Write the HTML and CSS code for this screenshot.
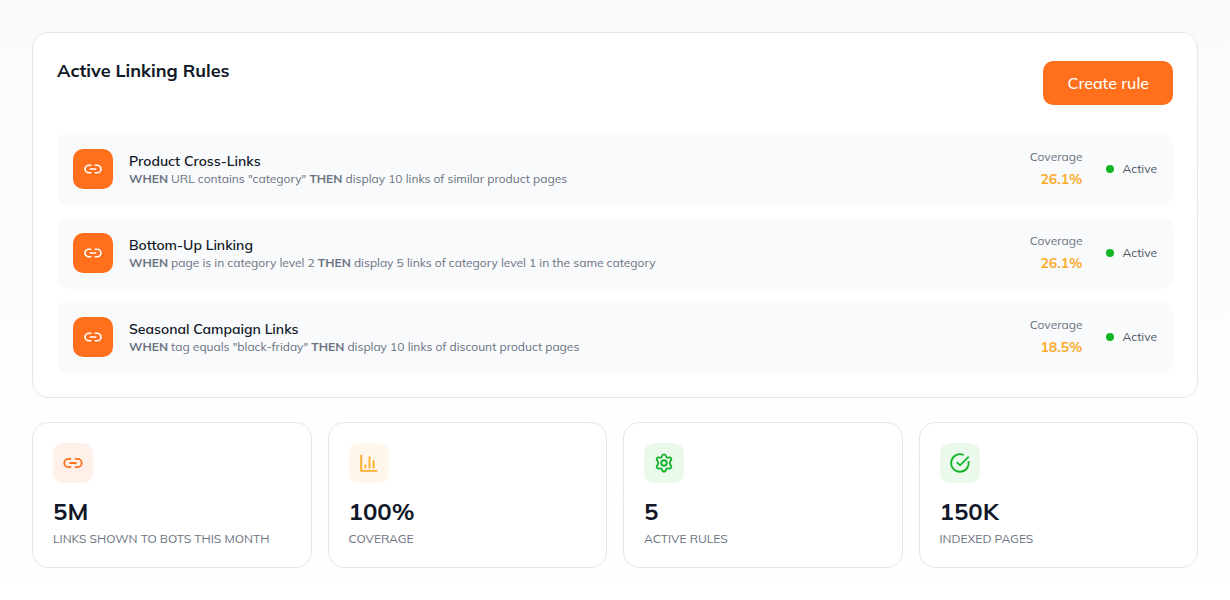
FILE: index.html
```html
<!DOCTYPE html>
<html lang="en">
  <head>
    <meta charset="utf-8" />
    <meta name="viewport" content="width=device-width, initial-scale=1" />
    <title>Active Linking Rules</title>
    <link rel="stylesheet" href="styles.css" />
  </head>
  <body>
    <svg class="sprite" aria-hidden="true">
      <symbol id="link" viewBox="0 0 24 24">
        <path d="M10 7.500H7a4.500 4.500 0 0 0 0 9h3M14 7.500h3a4.500 4.500 0 0 1 0 9h-3M8 12h8" />
      </symbol>
    </svg>
    <main class="dashboard">
      <section class="rules">
        <header class="rules-header">
          <h2>Active Linking Rules</h2>
          <button type="button" class="create">Create rule</button>
        </header>

        <ul class="rule-list">
          <li class="rule">
            <span class="icon solid"><svg><use href="#link" /></svg></span>
            <div class="rule-info">
              <h3>Product Cross-Links</h3>
              <p><strong>WHEN</strong> URL contains "category" <strong>THEN</strong> display 10 links of similar product pages</p>
            </div>
            <div class="coverage">
              <span>Coverage</span>
              <strong>26.1%</strong>
            </div>
            <span class="status">Active</span>
          </li>
          <li class="rule">
            <span class="icon solid"><svg><use href="#link" /></svg></span>
            <div class="rule-info">
              <h3>Bottom-Up Linking</h3>
              <p><strong>WHEN</strong> page is in category level 2 <strong>THEN</strong> display 5 links of category level 1 in the same category</p>
            </div>
            <div class="coverage">
              <span>Coverage</span>
              <strong>26.1%</strong>
            </div>
            <span class="status">Active</span>
          </li>
          <li class="rule">
            <span class="icon solid"><svg><use href="#link" /></svg></span>
            <div class="rule-info">
              <h3>Seasonal Campaign Links</h3>
              <p><strong>WHEN</strong> tag equals "black-friday" <strong>THEN</strong> display 10 links of discount product pages</p>
            </div>
            <div class="coverage">
              <span>Coverage</span>
              <strong>18.5%</strong>
            </div>
            <span class="status">Active</span>
          </li>
        </ul>
      </section>

      <section class="stats">
        <div class="stat">
          <span class="icon orange"><svg><use href="#link" /></svg></span>
          <strong class="value">5M</strong>
          <span class="label">Links shown to bots this month</span>
        </div>
        <div class="stat">
          <span class="icon yellow">
            <svg viewBox="0 0 24 24">
              <path d="M3.500 3v17.500H21M8 14v4M12.500 5v13M17 9v9" />
            </svg>
          </span>
          <strong class="value">100%</strong>
          <span class="label">Coverage</span>
        </div>
        <div class="stat">
          <span class="icon green">
            <svg viewBox="0 0 24 24">
              <path d="M9.800 4.600c.3-1.500 1-2.100 2.200-2.100s1.900.6 2.200 2.100c.2 1.200 1.500 1.900 2.600 1.500 1.500-.5 2.400-.3 3 .8s.4 2-.8 3c-.9.8-.9 3.400 0 4.200 1.200 1 1.400 1.900.8 3s-1.500 1.300-3 .8c-1.100-.4-2.400.3-2.600 1.500-.3 1.500-1 2.100-2.200 2.100s-1.900-.6-2.200-2.100c-.2-1.200-1.500-1.900-2.600-1.500-1.500.5-2.400.3-3-.8s-.4-2 .8-3c.9-.8.9-3.400 0-4.200-1.200-1-1.400-1.900-.8-3s1.500-1.300 3-.8c1.100.4 2.400-.3 2.600-1.500Z" />
              <circle cx="12" cy="12" r="3" />
            </svg>
          </span>
          <strong class="value">5</strong>
          <span class="label">Active rules</span>
        </div>
        <div class="stat">
          <span class="icon green">
            <svg viewBox="0 0 24 24">
              <path d="M16 3.300A9.600 9.600 0 1 0 21.300 10M8.500 11l3.500 3.500L21.500 5" />
            </svg>
          </span>
          <strong class="value">150K</strong>
          <span class="label">Indexed pages</span>
        </div>
      </section>
    </main>
  </body>
</html>
```

FILE: styles.css
```css
* {
  box-sizing: border-box;
}

body {
  margin: 0;
  min-height: 100vh;
  padding: 32px;
  background: linear-gradient(#f8fafc, #ffffff);
  color: #111827;
  font-family: Mulish, "Open Sans", sans-serif;
}

h2,
h3,
p,
ul {
  margin: 0;
  padding: 0;
}

.sprite {
  position: absolute;
  width: 0;
  height: 0;
}

.dashboard {
  display: flex;
  flex-direction: column;
  gap: 24px;
}

.rules,
.stat {
  background: #ffffff;
  border: 1px solid #e5e7eb;
  border-radius: 16px;
}

.rules {
  padding: 24px;
}

.rules-header {
  display: flex;
  justify-content: space-between;
  align-items: flex-start;
  margin-bottom: 28px;
}

.rules-header h2 {
  font-size: 18px;
  font-weight: 700;
  line-height: 28px;
}

.create {
  margin-top: 4px;
  height: 44px;
  padding: 0 24px;
  border: 0;
  border-radius: 10px;
  background: #ff6f1c;
  color: #ffffff;
  font-family: inherit;
  font-size: 16px;
  font-weight: 500;
  cursor: pointer;
}

.rule-list {
  display: flex;
  flex-direction: column;
  gap: 12px;
  list-style: none;
}

.rule {
  display: flex;
  align-items: center;
  padding: 16px;
  border-radius: 12px;
  background: #f9fafc;
}

.icon {
  display: flex;
  flex: none;
  align-items: center;
  justify-content: center;
  width: 40px;
  height: 40px;
  border-radius: 10px;
}

.icon svg {
  width: 22px;
  height: 22px;
  fill: none;
  stroke: currentColor;
  stroke-width: 2;
}

.solid {
  background: #ff6f1c;
  color: #ffffff;
}

.solid svg {
  width: 20px;
  height: 20px;
}

.orange {
  background: #fff1e9;
  color: #ff6f1c;
}

.yellow {
  background: #fff7ea;
  color: #fbaa2b;
}

.green {
  background: #eaf9ec;
  color: #12b525;
}

.rule-info {
  flex: 1;
  min-width: 0;
  padding-left: 16px;
}

.rule-info h3 {
  font-size: 14px;
  font-weight: 600;
  line-height: 20px;
}

.rule-info p {
  color: #6b7280;
  font-size: 12px;
  line-height: 16px;
}

.rule-info strong {
  font-weight: 700;
}

.coverage {
  display: flex;
  flex-direction: column;
  align-items: flex-end;
  gap: 4px;
  margin: 0 24px;
}

.coverage span {
  color: #6b7280;
  font-size: 12px;
  line-height: 16px;
}

.coverage strong {
  color: #fbaa2b;
  font-size: 14px;
  line-height: 20px;
}

.status {
  display: flex;
  align-items: center;
  gap: 8px;
  color: #4b5563;
  font-size: 12px;
  line-height: 16px;
}

.status::before {
  width: 8px;
  height: 8px;
  border-radius: 50%;
  background: #12b525;
  content: "";
}

.stats {
  display: grid;
  grid-template-columns: repeat(4, 1fr);
  gap: 16px;
}

.stat {
  display: flex;
  flex-direction: column;
  padding: 20px;
}

.value {
  margin: 12px 0 4px;
  font-size: 24px;
  line-height: 32px;
}

.label {
  color: #6b7280;
  font-size: 12px;
  line-height: 16px;
  text-transform: uppercase;
}

@media (max-width: 800px) {
  .stats {
    grid-template-columns: repeat(2, 1fr);
  }
}
```
